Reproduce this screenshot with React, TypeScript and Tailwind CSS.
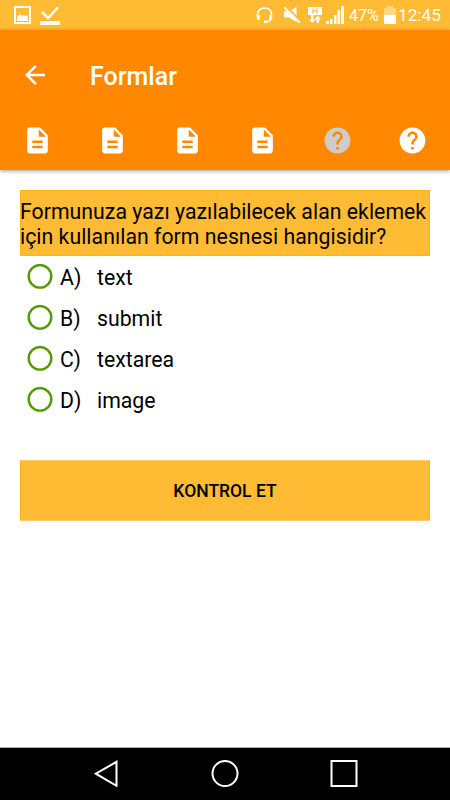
import { useState } from "react";

type Option = {
  letter: string;
  label: string;
};

type Tab = {
  kind: "page" | "quiz";
  active?: boolean;
};

const tabs: Tab[] = [
  { kind: "page" },
  { kind: "page" },
  { kind: "page" },
  { kind: "page" },
  { kind: "quiz", active: true },
  { kind: "quiz" }
];

const options: Option[] = [
  { letter: "A", label: "text" },
  { letter: "B", label: "submit" },
  { letter: "C", label: "textarea" },
  { letter: "D", label: "image" }
];

const tabPaths = {
  page: "M14 2H6c-1.1 0-1.99.9-1.99 2L4 20c0 1.1.89 2 1.99 2H18c1.1 0 2-.9 2-2V8l-6-6zm2 16H8v-2h8v2zm0-4H8v-2h8v2zm-3-5V3.5L18.5 9H13z",
  quiz: "M12 2C6.48 2 2 6.48 2 12s4.48 10 10 10 10-4.48 10-10S17.52 2 12 2zm1 17h-2v-2h2v2zm2.07-7.75l-.9.92C13.45 12.9 13 13.5 13 15h-2v-.5c0-1.1.45-2.1 1.17-2.83l1.24-1.26c.37-.36.59-.86.59-1.41 0-1.1-.9-2-2-2s-2 .9-2 2H8c0-2.21 1.79-4 4-4s4 1.79 4 4c0 .88-.36 1.68-.93 2.25z"
};

function StatusBar() {
  return (
    <div className="flex h-[30px] items-start bg-[#ffbb33] text-white">
      <svg className="mt-1.5 ml-3.5 h-[18px] w-[17px]" viewBox="0 0 17 18" fill="currentColor">
        <path fillRule="evenodd" d="M0 0h17v18H0zM2 2v14h13V2z" />
        <path d="M3 15v-4l3-3 2 2 1.5-1 1.5 1 1.5-1L14 11v4z" />
      </svg>
      <svg className="mt-1.5 ml-[9px] h-[19px] w-5" viewBox="0 0 20 19">
        <path d="M2 6l6 6L18 1.5" fill="none" stroke="currentColor" strokeWidth="2.5" />
        <path d="M0 15h20v4H0z" fill="currentColor" />
      </svg>

      <svg className="mt-[7px] ml-[196px] h-4 w-[17px]" viewBox="0 0 17 16" fill="none" stroke="currentColor">
        <path d="M1.500 11V7.500C1.500 3.500 4.500 1 8.500 1s7 2.500 7 6.500V11" strokeWidth="1.700" />
        <path d="M2.500 8v5M14.500 8v5" strokeWidth="2.500" />
        <path d="M14.500 12.500c-.5 1.800-2 2.300-3.500 2.300" strokeWidth="1.200" />
        <path d="M8 14.800h4" strokeWidth="2.400" />
      </svg>
      <svg className="mt-[7px] ml-[11px] h-4 w-[17px]" viewBox="0 0 17 16">
        <path d="M0 4.500h5L12.500 0v15L5 10.500H0z" fill="currentColor" />
        <path d="M2 -.5l15 15" stroke="#ffbb33" strokeWidth="1.800" />
        <path d="M0 0l16 16" stroke="currentColor" strokeWidth="1.700" />
      </svg>
      <svg className="mt-[7px] ml-[7px] h-4 w-[14px]" viewBox="0 0 14 16" fill="currentColor">
        <path d="M0 0h14v8H0z" />
        <path d="M5 1.500v5M9 1.500v5M5 4h4" stroke="#ffbb33" strokeWidth="1.200" />
        <path d="M3 8h2.500v4.500h2L4.250 16 1 12.500h2zM8.500 16v-3.500h-2L9.750 8.500 13 12.500h-2V16z" />
      </svg>
      <svg className="mt-1.5 ml-1 h-[18px] w-[18px]" viewBox="0 0 18 18" fill="currentColor">
        <path d="M0 15h3v3H0zM4 13h2.500v5H4zM8 9h2.500v9H8zM11.500 4H14v14h-2.500zM15 0h3v18h-3z" />
      </svg>
      <span className="mt-1.5 ml-[5px] w-[35px] text-[16px] leading-5 whitespace-nowrap">47%</span>
      <svg className="mt-1.5 h-[18px] w-3" viewBox="0 0 12 18" fill="currentColor">
        <path d="M3 0h6v2h3v7H0V2h3z" opacity="0.4" />
        <path d="M0 9h12v9H0z" />
      </svg>
      <span className="mt-[5px] ml-0.5 text-[17.200px] leading-5 whitespace-nowrap">12:45</span>
    </div>
  );
}

function AppBar() {
  return (
    <header className="h-[140px] bg-[#ff8800] text-white shadow-[0_1px_4px_rgba(0,0,0,0.4)]">
      <div className="flex h-[94px] items-start pt-[30px] pl-5">
        <svg className="size-[30px]" viewBox="0 0 24 24" fill="currentColor">
          <path d="M20 11H7.830l5.590-5.590L12 4l-8 8 8 8 1.410-1.410L7.830 13H20v-2z" />
        </svg>
        <h1 className="mt-0.5 ml-10 text-[25px] leading-[30px] font-medium">Formlar</h1>
      </div>
      <nav className="grid grid-cols-6">
        {tabs.map((tab, index) => (
          <div key={index} className="flex h-8 items-center justify-center">
            <svg
              className={tab.active ? "size-[31px] text-[#cccccc]" : "size-[31px]"}
              viewBox="0 0 24 24"
              fill="currentColor"
            >
              <path d={tabPaths[tab.kind]} />
            </svg>
          </div>
        ))}
      </nav>
    </header>
  );
}

function RadioMark({ checked }: { checked: boolean }) {
  return (
    <svg className="size-[26px]" viewBox="0 0 26 26">
      <circle cx="13" cy="12.300" r="11.300" fill="none" stroke="#559900" strokeWidth="2.400" />
      {checked && <circle cx="13" cy="12.300" r="6" fill="#559900" />}
    </svg>
  );
}

function NavigationBar() {
  return (
    <footer className="flex h-[53px] items-center justify-between border-t border-[#aaaaaa] bg-black px-[92px] text-white">
      <svg className="h-7 w-[27px]" viewBox="0 0 27 28" fill="none" stroke="currentColor" strokeWidth="2">
        <path d="M24.500 1.800v24L3.800 13.700z" />
      </svg>
      <svg className="size-7" viewBox="0 0 28 28" fill="none" stroke="currentColor" strokeWidth="2">
        <circle cx="14" cy="13.500" r="12.500" />
      </svg>
      <svg className="size-7" viewBox="0 0 28 28" fill="none" stroke="currentColor" strokeWidth="2">
        <path d="M1.500 1h25v25h-25z" />
      </svg>
    </footer>
  );
}

export default function App() {
  const [selected, setSelected] = useState<string | null>(null);

  return (
    <div className="flex h-[800px] w-[450px] flex-col bg-white font-[Roboto,sans-serif] text-black">
      <StatusBar />
      <AppBar />

      <main className="flex-1 px-5 pt-5">
        <p className="h-[66px] bg-[#ffbb33] pt-[9px] text-[21.250px] leading-[25px] tracking-[0.030px] whitespace-nowrap inset-ring inset-ring-[#ffb414]">
          Formunuza yazı yazılabilecek alan eklemek
          <br />
          için kullanılan form nesnesi hangisidir?
        </p>

        <div>
          {options.map((option) => (
            <button
              key={option.letter}
              type="button"
              className="flex h-[41px] w-full items-center pl-[7px] text-left text-[21.250px]"
              onClick={() => setSelected(option.letter)}
            >
              <RadioMark checked={selected === option.letter} />
              <span className="ml-[7px] w-[37px] pt-0.5">{option.letter})</span>
              <span className="pt-0.5">{option.label}</span>
            </button>
          ))}
        </div>

        <button
          type="button"
          className="mt-10 h-[61px] w-full border border-x-[#ffb414] border-y-[#fbcb70] bg-[#ffbb33] pt-0.5 text-[17.500px] font-medium"
        >
          KONTROL ET
        </button>
      </main>

      <NavigationBar />
    </div>
  );
}
